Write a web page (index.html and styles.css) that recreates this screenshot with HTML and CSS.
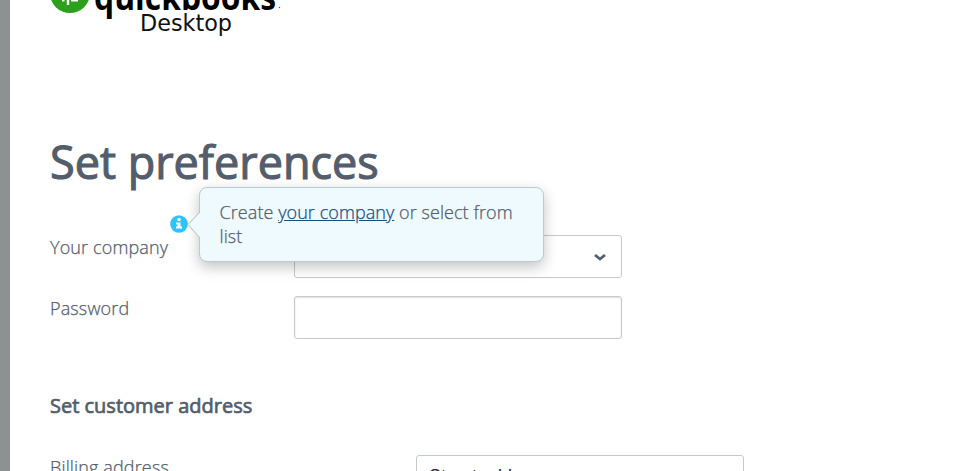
FILE: index.html
```html
<!DOCTYPE html>
<html lang="en">
<head>
<meta charset="utf-8">
<title>Set preferences</title>
<link rel="stylesheet" href="styles.css">
</head>
<body>
<main class="page">
  <svg class="logo" width="260" height="40" viewBox="0 0 260 40" role="img" aria-label="quickbooks Desktop">
    <circle cx="20" cy="-7" r="20" fill="#2ca01c"/>
    <path d="M18 -14V5M12 0.3H14.5M21 0.3H28" fill="none" stroke="#fff" stroke-width="2.4"/>
    <text class="logo-brand" x="44" y="9.5" textLength="182" lengthAdjust="spacingAndGlyphs">quickbooks</text>
    <circle cx="229.5" cy="7.5" r=".7" fill="#555"/>
    <text class="logo-product" x="90" y="31" textLength="92" lengthAdjust="spacingAndGlyphs">Desktop</text>
  </svg>
  <h1 class="title">Set preferences</h1>
  <form class="form">
    <div class="row">
      <label class="label">Your company</label>
      <div class="field select"><svg class="chevron" width="14" height="10" viewBox="0 0 14 10"><path d="M2 3L7 7L12 3" fill="none" stroke="#565f6e" stroke-width="2.8"/></svg></div>
      <span class="info"><svg width="18" height="18" viewBox="0 0 18 18"><circle cx="9" cy="9" r="8.8" fill="#30c4f4"/><path d="M7.5 3.3h3v2.6h-3zM6 7.4h4.5v4.2H12v2H6v-2h1.5V9.2H6z" fill="#fff"/></svg></span>
      <div class="tooltip">
        <svg class="arrow" width="13" height="26" viewBox="0 0 13 26"><path d="M13 0L1 12.5L13 26" fill="#effaff" stroke="#b3bbbf"/></svg>
        Create <a class="link">your company</a> or select from list
      </div>
    </div>
    <div class="row"><label class="label">Password</label><div class="field password"></div></div>
    <h2 class="subtitle">Set customer address</h2>
    <div class="row address"><label class="label">Billing address</label><div class="field street">Street address</div></div>
  </form>
</main>
</body>
</html>
```
FILE: styles.css
```css
* { box-sizing: border-box; }
body {
  margin: 0;
  height: 471px;
  overflow: hidden;
  background: #fff;
  font: 18px/24px "Open Sans", sans-serif;
  color: #535d6b;
}
.page {
  height: 471px;
  overflow: hidden;
  padding-left: 40px;
  border-left: 10px solid #8d9192;
}
.logo { display: block; overflow: visible; }
.logo-brand { font: 700 35px "Open Sans", sans-serif; fill: #000; }
.logo-product { font: 23px "DejaVu Sans", sans-serif; fill: #111; }
.title {
  margin: 90px 0 0;
  height: 64px;
  font-size: 45px;
  line-height: 64px;
  font-weight: 400;
  -webkit-text-stroke: 1.1px #535d6b;
}
.form { padding-top: 41px; }
.row {
  position: relative;
  display: flex;
  height: 43px;
  margin-bottom: 18px;
}
.label, .tooltip {
  font-weight: 300;
  letter-spacing: .14px;
  -webkit-text-stroke: .25px currentColor;
}
.label { width: 244px; }
.field {
  width: 328px;
  height: 43px;
  border: 1px solid #c8c8c8;
  border-radius: 3px;
  background: #fff;
}
.select { display: flex; align-items: center; justify-content: flex-end; padding-right: 14px; }
.password { box-shadow: inset 0 1px 2px rgba(0, 0, 0, .12); }
.info { position: absolute; left: 119.5px; top: -20px; height: 18px; line-height: 0; }
.tooltip {
  position: absolute;
  left: 149px;
  top: -48px;
  width: 345px;
  height: 75px;
  padding: 12px 19.5px;
  border: 1px solid #b9cad3;
  border-radius: 8px;
  background: #effaff;
  box-shadow: 0 5px 14px rgba(0, 0, 0, .24);
  letter-spacing: .07px;
}
.arrow { position: absolute; left: -13px; top: 24px; }
.link { color: #174f80; text-decoration: underline; }
.subtitle {
  margin: 54px 0 0;
  height: 62px;
  font-size: 20px;
  line-height: 26px;
  font-weight: 400;
  -webkit-text-stroke: .7px #535d6b;
}
.address .label { width: 366px; }
.street {
  padding: 8px 12px;
  border-color: #c3cacf;
  color: #222;
  font-family: "Liberation Sans", sans-serif;
}
```
